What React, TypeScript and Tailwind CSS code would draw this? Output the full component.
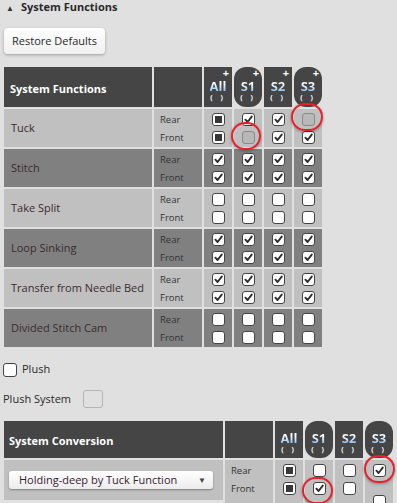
import React from 'react';

type Box = 'on' | 'off' | 'ind' | 'dis';

const font = { fontFamily: '"Open Sans", "Noto Sans", sans-serif' };

function Check({ v }: { v: Box }) {
  if (v === 'dis') {
    return <span className="block h-[13px] w-[13px] rounded-[3px] border border-[#8a8a8a] bg-[#b8b8b8]" />;
  }
  return (
    <span className="flex h-[13px] w-[13px] items-center justify-center rounded-[3px] border-[1.5px] border-[#444] bg-white">
      {v === 'on' && (
        <svg width="9" height="9" viewBox="0 0 10 10">
          <path d="M1.6 5.2 L4 7.8 L8.6 1.8" fill="none" stroke="#2e2e2e" strokeWidth="2.1" strokeLinecap="round" strokeLinejoin="round" />
        </svg>
      )}
      {v === 'ind' && <span className="block h-[7px] w-[7px] bg-[#383838]" />}
    </span>
  );
}

function Ring({ className }: { className: string }) {
  return (
    <span
      className={`pointer-events-none absolute rounded-full border-2 border-[#e8202a] shadow-[0_1px_3px_rgba(0,0,0,0.35)] ${className}`}
    />
  );
}

function ColHead({ name, round, plus }: { name: string; round?: boolean; plus?: boolean }) {
  return (
    <div
      className={`relative flex flex-col items-center justify-end bg-[#454545] ${plus ? 'pb-[5px]' : 'pb-[4px]'} ${round ? 'rounded-[12px]' : ''}`}
    >
      {plus && <span className="absolute right-[3px] top-[1px] text-[11px] font-bold leading-[10px] text-white">+</span>}
      <span className="bg-gradient-to-b from-white from-30% to-[#6cb4f5] bg-clip-text text-[13px] font-bold leading-[13px] text-transparent">
        {name}
      </span>
      <span className="mt-[1px] text-[7px] font-bold leading-[8px] tracking-[3px] text-white">( )</span>
    </div>
  );
}

type Row = { label: string; light: boolean; cols: [Box, Box][] };

const rows: Row[] = [
  { label: 'Tuck', light: true, cols: [['ind', 'ind'], ['on', 'dis'], ['on', 'on'], ['dis', 'on']] },
  { label: 'Stitch', light: false, cols: [['on', 'on'], ['on', 'on'], ['on', 'on'], ['on', 'on']] },
  { label: 'Take Split', light: true, cols: [['off', 'off'], ['off', 'off'], ['off', 'off'], ['off', 'off']] },
  { label: 'Loop Sinking', light: false, cols: [['on', 'on'], ['on', 'on'], ['on', 'on'], ['on', 'on']] },
  { label: 'Transfer from Needle Bed', light: true, cols: [['on', 'on'], ['on', 'on'], ['on', 'on'], ['on', 'on']] },
  { label: 'Divided Stitch Cam', light: false, cols: [['off', 'off'], ['off', 'off'], ['off', 'off'], ['off', 'off']] },
];

function SideCell({ bg }: { bg: string }) {
  return (
    <div className={`flex flex-col justify-center gap-[5px] pl-[6px] text-[9.5px] leading-[13px] text-[#333] ${bg}`}>
      <span>Rear</span>
      <span>Front</span>
    </div>
  );
}

export default function App() {
  return (
    <div className="h-[503px] w-[397px] overflow-hidden bg-[#e0e0e0] text-[#333]" style={font}>
      <div className="flex h-[15px] items-center pl-[6px]">
        <span className="text-[8px] leading-none text-[#333]">▲</span>
        <span className="ml-[7px] text-[11px] font-bold text-[#2a2a2a]">System Functions</span>
      </div>

      <div className="px-[4px] pt-[12px]">
        <button className="h-[26px] rounded-[4px] bg-gradient-to-b from-white to-[#f0f0f0] px-[8px] text-[11px] text-[#2a2a2a] shadow-[0_1px_3px_rgba(0,0,0,0.3)]">
          Restore Defaults
        </button>
      </div>

      <div className="relative ml-[4px] mt-[13px] grid w-fit grid-cols-[148px_48px_28px_28px_28px_28px] gap-[2px]">
        <div className="flex h-[40px] items-center bg-[#454545] pl-[6px] pt-[4px] text-[11px] font-bold text-white">
          System Functions
        </div>
        <div className="bg-[#454545]" />
        <ColHead name="All" plus />
        <ColHead name="S1" round plus />
        <ColHead name="S2" plus />
        <ColHead name="S3" round plus />

        {rows.map((r) => {
          const bg = r.light ? 'bg-[#c0c0c0]' : 'bg-[#808080]';
          return (
            <React.Fragment key={r.label}>
              <div className={`flex h-[38px] items-center pl-[7px] text-[11px] text-[#3a2c30] ${bg}`}>{r.label}</div>
              <SideCell bg={bg} />
              {r.cols.map((c, i) => (
                <div key={i} className={`flex flex-col items-center justify-center gap-[5px] ${bg}`}>
                  <Check v={c[0]} />
                  <Check v={c[1]} />
                </div>
              ))}
            </React.Fragment>
          );
        })}

        <Ring className="left-[227px] top-[55px] h-[28px] w-[30px]" />
        <Ring className="left-[287px] top-[36px] h-[28px] w-[32px]" />
      </div>

      <div className="mt-[14px] flex items-center pl-[3px]">
        <span className="block h-[14px] w-[14px] rounded-[3px] border-[1.5px] border-[#444] bg-white" />
        <span className="ml-[5px] text-[11px] text-[#2a2a2a]">Plush</span>
      </div>

      <div className="mt-[12px] flex items-center pl-[3px]">
        <span className="text-[11px] text-[#2a2a2a]">Plush System</span>
        <span className="ml-[12px] block h-[18px] w-[20px] rounded-[3px] border border-[#b4b4b4]" />
      </div>

      <div className="relative ml-[4px] mt-[13px] grid w-fit grid-cols-[219px_48px_28px_28px_28px_28px] gap-[2px]">
        <div className="flex h-[37px] items-center bg-[#454545] pl-[5px] pt-[4px] text-[11px] font-bold text-white">
          System Conversion
        </div>
        <div className="bg-[#454545]" />
        <ColHead name="All" />
        <ColHead name="S1" round />
        <ColHead name="S2" />
        <ColHead name="S3" round />

        <div className="flex h-[40px] items-start bg-[#c0c0c0] pl-[5px] pt-[11px]">
          <div className="flex h-[18px] w-[204px] items-center justify-between rounded-[3px] bg-gradient-to-b from-white to-[#ececec] pl-[10px] pr-[7px] shadow-[0_1px_2px_rgba(0,0,0,0.35)]">
            <span className="text-[11px] text-[#3a2035]">Holding-deep by Tuck Function</span>
            <span className="text-[8px] text-[#444]">▼</span>
          </div>
        </div>
        <div className="flex flex-col justify-start gap-[5px] bg-[#c0c0c0] pl-[6px] pt-[4px] text-[9.5px] leading-[13px] text-[#333]">
          <span>Rear</span>
          <span>Front</span>
        </div>
        <div className="flex flex-col items-center gap-[5px] bg-[#c0c0c0] pt-[4px]">
          <Check v="ind" />
          <Check v="ind" />
        </div>
        <div className="flex flex-col items-center gap-[5px] bg-[#c0c0c0] pt-[4px]">
          <Check v="off" />
          <Check v="on" />
        </div>
        <div className="flex flex-col items-center gap-[5px] bg-[#c0c0c0] pt-[4px]">
          <Check v="off" />
          <Check v="off" />
        </div>
        <div className="flex flex-col items-center gap-[18px] bg-[#c0c0c0] pt-[4px]">
          <Check v="on" />
          <Check v="off" />
        </div>

        <Ring className="left-[298px] top-[56px] h-[27px] w-[31px]" />
        <Ring className="left-[360px] top-[34px] h-[28px] w-[31px]" />
      </div>
    </div>
  );
}
